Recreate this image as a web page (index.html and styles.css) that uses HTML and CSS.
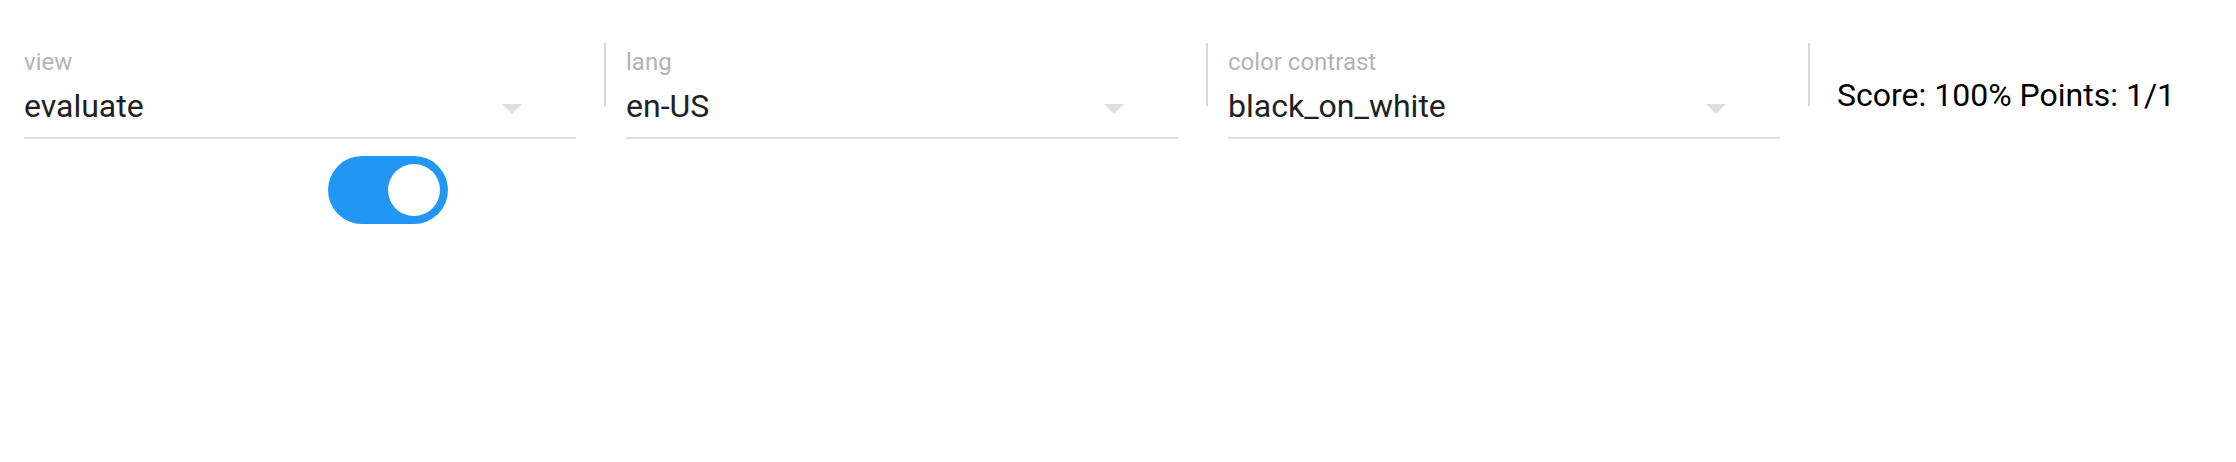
FILE: index.html
```html
<!DOCTYPE html>
<html lang="en">
<head>
<meta charset="utf-8">
<title>Settings</title>
<link rel="stylesheet" href="styles.css">
</head>
<body>
<div class="toolbar">
  <div class="field">
    <div class="field-label">view</div>
    <div class="field-select">
      <span class="field-value">evaluate</span>
      <svg class="arrow" width="20" height="10" viewBox="0 0 20 10"><path d="M0 0L10 10L20 0Z" fill="#e0e0e0"/></svg>
    </div>
  </div>
  <div class="sep"></div>
  <div class="field">
    <div class="field-label">lang</div>
    <div class="field-select">
      <span class="field-value">en-US</span>
      <svg class="arrow" width="20" height="10" viewBox="0 0 20 10"><path d="M0 0L10 10L20 0Z" fill="#e0e0e0"/></svg>
    </div>
  </div>
  <div class="sep"></div>
  <div class="field">
    <div class="field-label">color contrast</div>
    <div class="field-select">
      <span class="field-value">black_on_white</span>
      <svg class="arrow" width="20" height="10" viewBox="0 0 20 10"><path d="M0 0L10 10L20 0Z" fill="#e0e0e0"/></svg>
    </div>
  </div>
  <div class="sep"></div>
  <div class="score">Score: 100% Points: 1/1</div>
</div>
<div class="toggle-row">
  <div class="toggle"><div class="knob"></div></div>
</div>
</body>
</html>
```
FILE: styles.css
```css
html, body {
  margin: 0;
  padding: 0;
  background: #ffffff;
}
body {
  font-family: Roboto, "Liberation Sans", sans-serif;
  color: #000;
}
.toolbar {
  display: flex;
  align-items: flex-start;
  padding-left: 4px;
}
.field {
  width: 552px;
  padding: 48px 28px 0 20px;
  flex: none;
}
.field-label {
  font-size: 24px;
  line-height: 28px;
  height: 28px;
  color: #b3b3b3;
  white-space: nowrap;
}
.field-select {
  margin-top: 10px;
  display: flex;
  align-items: flex-start;
  justify-content: space-between;
  padding-bottom: 11px;
  border-bottom: 2px solid #e0e0e0;
}
.field-value {
  font-size: 32px;
  line-height: 40px;
  color: #212121;
  white-space: nowrap;
}
.arrow {
  display: block;
  margin-top: 18px;
  margin-right: 54px;
  flex: none;
}
.sep {
  width: 2px;
  height: 63px;
  margin-top: 43px;
  background: #d6d6d6;
  flex: none;
}
.score {
  padding: 75px 0 0 27px;
  font-size: 32px;
  line-height: 40px;
  color: #000;
  white-space: nowrap;
}
.toggle-row {
  display: flex;
  padding-left: 328px;
  margin-top: 17px;
}
.toggle {
  width: 120px;
  height: 68px;
  border-radius: 34px;
  background: #2196f3;
  display: flex;
  align-items: center;
  justify-content: flex-end;
  padding-right: 8px;
  box-sizing: border-box;
}
.knob {
  width: 52px;
  height: 52px;
  border-radius: 50%;
  background: #ffffff;
}
```
